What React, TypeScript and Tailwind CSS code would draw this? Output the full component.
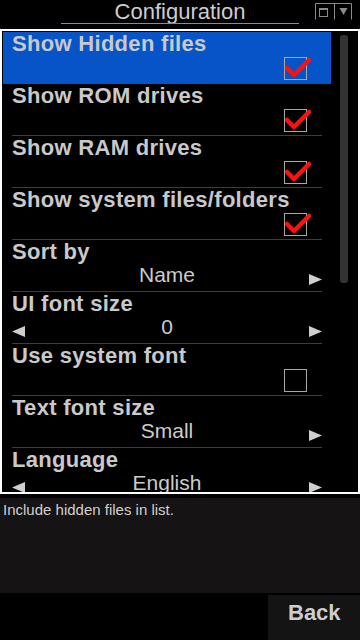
import React from "react";

type Row =
  | { label: string; kind: "check"; checked: boolean }
  | { label: string; kind: "value"; value: string; left: boolean; right: boolean };

const rows: Row[] = [
  { label: "Show Hidden files", kind: "check", checked: true },
  { label: "Show ROM drives", kind: "check", checked: true },
  { label: "Show RAM drives", kind: "check", checked: true },
  { label: "Show system files/folders", kind: "check", checked: true },
  { label: "Sort by", kind: "value", value: "Name", left: false, right: true },
  { label: "UI font size", kind: "value", value: "0", left: true, right: true },
  { label: "Use system font", kind: "check", checked: false },
  { label: "Text font size", kind: "value", value: "Small", left: false, right: true },
  { label: "Language", kind: "value", value: "English", left: true, right: true },
];

function CheckBox({ checked }: { checked: boolean }) {
  return (
    <div className="relative w-[23px] h-[23px] border border-[#a8a8a8]">
      {checked && (
        <svg
          className="absolute left-[-1px] top-[-1px] overflow-visible"
          width="23"
          height="23"
          viewBox="0 0 23 23"
        >
          <path
            d="M3 11 L10 18 L25 3"
            fill="none"
            stroke="#ff1010"
            strokeWidth="4.5"
            strokeLinecap="round"
            strokeLinejoin="round"
          />
        </svg>
      )}
    </div>
  );
}

function ArrowRight() {
  return (
    <svg width="13" height="11" viewBox="0 0 13 11">
      <path d="M0 0 L13 5.5 L0 11 Z" fill="#cfcfcf" />
    </svg>
  );
}

function ArrowLeft() {
  return (
    <svg width="13" height="11" viewBox="0 0 13 11">
      <path d="M13 0 L0 5.5 L13 11 Z" fill="#cfcfcf" />
    </svg>
  );
}

export default function App() {
  return (
    <div
      className="w-[360px] h-[640px] bg-black flex flex-col overflow-hidden"
      style={{ fontFamily: '"Liberation Sans", Arial, sans-serif' }}
    >
      {/* Header */}
      <div className="h-[29px] flex shrink-0">
        <div className="ml-[61px] w-[238px] flex flex-col">
          <div className="text-[22px] leading-[23px] text-[#cdcdcd] text-center">Configuration</div>
          <div className="h-px bg-[#8c8c8c]" />
        </div>
        <div className="ml-[16px] mt-[3px]">
          <svg width="38" height="17" viewBox="0 0 38 17">
            <path d="M0.5 0.5 H36.5 M0.5 0.5 V16.5 M19.5 0.5 V16.5 M36.5 0.5 V16.5" stroke="#8a8a8a" strokeWidth="1" fill="none" />
            <rect x="4.5" y="5.5" width="8" height="8" stroke="#8a8a8a" strokeWidth="1" fill="none" />
            <rect x="4.5" y="5" width="8" height="2" fill="#8a8a8a" />
            <path d="M24.5 5 H32.5 L28.5 12 Z" fill="#8a8a8a" />
          </svg>
        </div>
      </div>

      {/* List */}
      <div className="h-[465px] border-2 border-white pt-px pl-px flex overflow-hidden shrink-0">
        <div className="w-[328px] flex flex-col">
          {rows.map((r, i) => {
            const selected = i === 0;
            return (
              <div
                key={r.label}
                className={`h-[52px] shrink-0 flex flex-col ${selected ? "bg-[#0753c8]" : ""}`}
              >
                <div className="flex-1 px-[9px] flex flex-col">
                  <div className="text-[22px] leading-[23px] font-bold tracking-[0.3px] text-[#c9c9c9] whitespace-nowrap">
                    {r.label}
                  </div>
                  {r.kind === "check" ? (
                    <div className="flex justify-end pr-[15px] pt-[2px]">
                      <CheckBox checked={r.checked} />
                    </div>
                  ) : (
                    <div className="grid grid-cols-[13px_1fr_13px] items-start">
                      <div className="pt-[11px]">{r.left && <ArrowLeft />}</div>
                      <div className="text-[21px] leading-[24px] text-[#cbcbcb] text-center">{r.value}</div>
                      <div className="pt-[11px]">{r.right && <ArrowRight />}</div>
                    </div>
                  )}
                </div>
                <div className={`mx-[9px] h-px ${selected ? "bg-transparent" : "bg-[#3d3d3d]"}`} />
              </div>
            );
          })}
        </div>
        <div className="pl-[9px] pt-[3px]">
          <div className="w-[8px] h-[248px] rounded-[3px] bg-[#333333]" />
        </div>
      </div>

      {/* Description */}
      <div className="mt-[4px] h-[95px] bg-[#151313] pl-[3px] pt-[3px] shrink-0">
        <div className="text-[15px] leading-[18px] text-[#d0d0d0]">Include hidden files in list.</div>
      </div>

      {/* Bottom bar */}
      <div className="flex-1 flex justify-end pt-[2px]">
        <div className="w-[92px] bg-[#141414] pl-[20px] pt-[6px]">
          <div className="text-[22px] leading-[24px] font-bold text-[#cdcdcd]">Back</div>
        </div>
      </div>
    </div>
  );
}
